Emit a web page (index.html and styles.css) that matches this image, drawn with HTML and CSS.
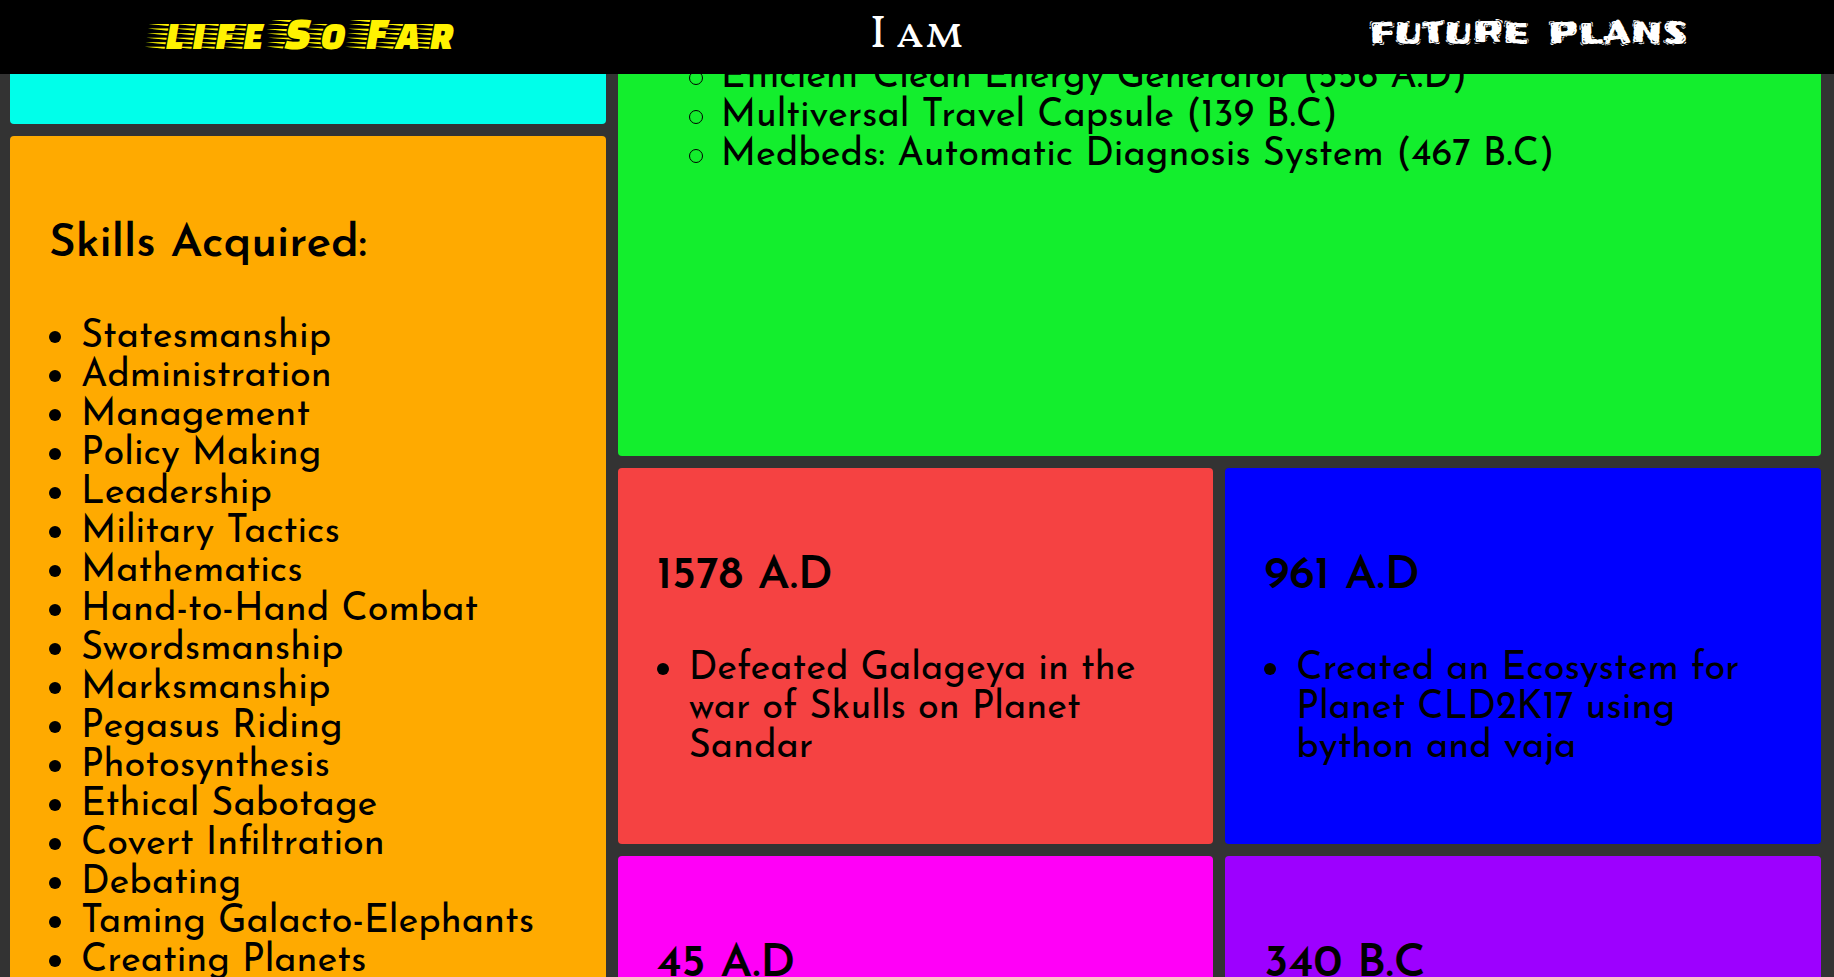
FILE: index.html
```html
<!DOCTYPE html>
<html lang="en">
<head>
<meta charset="utf-8">
<meta name="viewport" content="width=device-width, initial-scale=1">
<title>I am</title>
<link rel="stylesheet" href="styles.css">
</head>
<body>
<header class="topbar">
  <nav class="nav">
    <a class="nav-link life" href="#life">life So Far</a>
    <a class="nav-link iam" href="#iam">I am</a>
    <a class="nav-link future" href="#future">future plans</a>
  </nav>
</header>
<main class="grid">
  <section class="card cyan"></section>
  <section class="card green">
    <ul class="inventions">
      <li>Efficient Clean Energy Generator (556 A.D)</li>
      <li>Multiversal Travel Capsule (139 B.C)</li>
      <li>Medbeds: Automatic Diagnosis System (467 B.C)</li>
    </ul>
  </section>
  <section class="card orange">
    <h2>Skills Acquired:</h2>
    <ul>
      <li>Statesmanship</li>
      <li>Administration</li>
      <li>Management</li>
      <li>Policy Making</li>
      <li>Leadership</li>
      <li>Military Tactics</li>
      <li>Mathematics</li>
      <li>Hand-to-Hand Combat</li>
      <li>Swordsmanship</li>
      <li>Marksmanship</li>
      <li>Pegasus Riding</li>
      <li>Photosynthesis</li>
      <li>Ethical Sabotage</li>
      <li>Covert Infiltration</li>
      <li>Debating</li>
      <li>Taming Galacto-Elephants</li>
      <li>Creating Planets</li>
    </ul>
  </section>
  <section class="card red">
    <h2>1578 A.D</h2>
    <ul>
      <li>Defeated Galageya in the war of Skulls on Planet Sandar</li>
    </ul>
  </section>
  <section class="card blue">
    <h2>961 A.D</h2>
    <ul>
      <li>Created an Ecosystem for Planet CLD2K17 using bython and vaja</li>
    </ul>
  </section>
  <section class="card magenta">
    <h2>45 A.D</h2>
  </section>
  <section class="card violet">
    <h2>340 B.C</h2>
  </section>
</main>
</body>
</html>
```
FILE: styles.css
```css
* {
  box-sizing: border-box;
}

body {
  height: 100vh;
  margin: 0;
  overflow: hidden;
  background: #333;
  color: #000;
  font-family: "Josefin Sans", Lato, sans-serif;
  font-size: 38px;
  font-weight: 400;
  line-height: 39px;
}

.topbar {
  position: fixed;
  top: 0;
  left: 0;
  right: 0;
  z-index: 1;
  background: #000;
}

.nav {
  display: grid;
  grid-template-columns: repeat(3, 1fr);
  height: 74px;
}

.nav-link {
  display: flex;
  align-items: center;
  justify-content: center;
  padding-bottom: 10px;
  color: #fff;
  text-decoration: none;
  white-space: pre;
}

.life {
  color: #fff200;
  font-family: "Faster One", Lato, sans-serif;
  font-size: 47px;
}

.iam {
  padding-bottom: 4px;
  font-family: "Vollkorn SC", "Liberation Serif", serif;
  font-size: 46px;
}

.future {
  font-family: Frijole, "DejaVu Sans", sans-serif;
  font-size: 37px;
}

.grid {
  display: grid;
  grid-template-columns: repeat(3, 1fr);
  grid-template-rows: 124px 320px 376px 376px;
  gap: 12px;
  padding: 0 13px 0 10px;
}

.card {
  padding: 38px 39px;
  border-radius: 4px;
}

.cyan { background: #00ffea; }

.green {
  grid-column: 2 / 4;
  grid-row: 1 / 3;
  background: #13ee2d;
}

.orange {
  grid-column: 1;
  grid-row: 2 / 5;
  background: #ffaa00;
}

.red { background: #f54242; }
.blue { background: #0000ff; }
.magenta { background: #ff00f7; }
.violet { background: #9d00ff; }

h2 {
  margin: 48px 0 50px;
  font-size: 46px;
  font-weight: 600;
  line-height: 46px;
}

ul {
  margin: 0;
  padding-left: 32px;
  list-style: none;
}

li::before {
  content: "";
  float: left;
  width: 12px;
  height: 12px;
  margin: 13px 0 0 -32px;
  border-radius: 50%;
  background: #000;
}

.inventions {
  padding: 20px 0 0 64px;
}

.inventions li::before {
  border: 1px solid #000;
  background: none;
}
```
